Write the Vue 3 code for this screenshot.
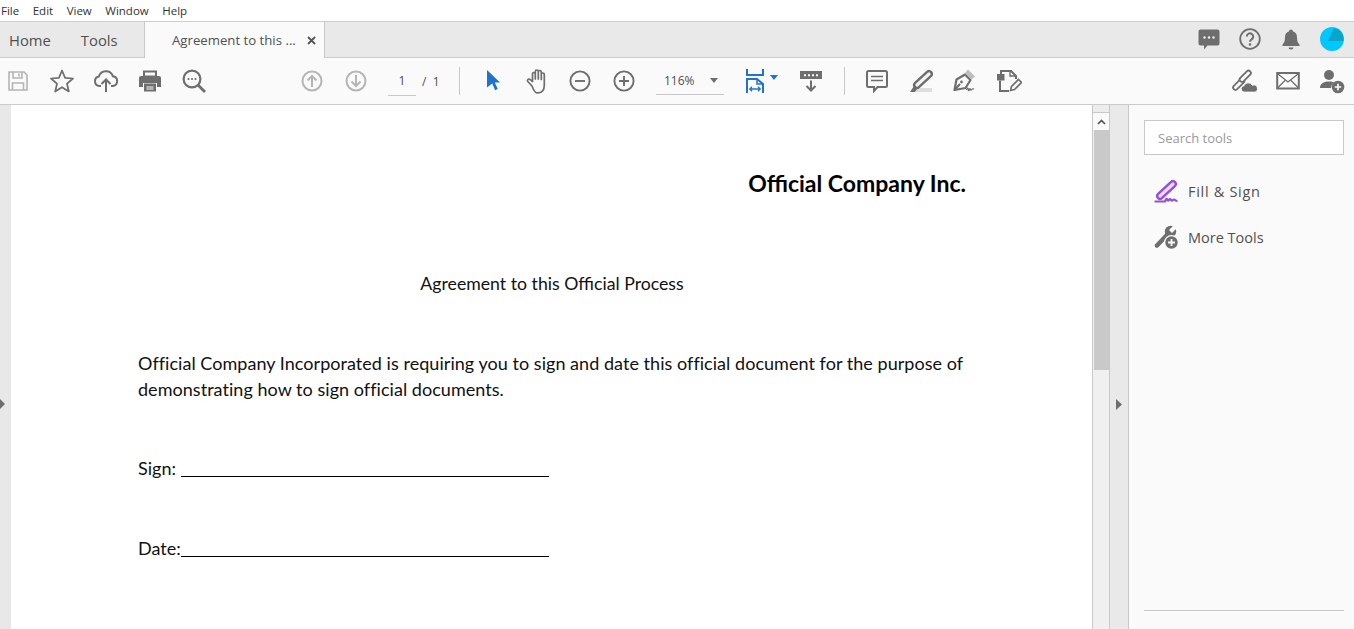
<script setup>
</script>

<template>
  <div class="app">
    <nav class="menubar">
      <span>File</span><span>Edit</span><span>View</span><span>Window</span><span>Help</span>
    </nav>

    <header class="tabbar">
      <div class="navtabs"><span class="home">Home</span><span class="tools">Tools</span></div>
      <div class="doctab">
        <span class="doctitle">Agreement to this ...</span>
        <svg class="close" width="9" height="9" viewBox="0 0 9 9"><path d="M1 1l7 7M8 1L1 8" stroke="#555" stroke-width="1.8"/></svg>
      </div>
      <div class="tabright">
        <svg width="24" height="24" viewBox="0 0 24 24"><path d="M3.500 2.500h17a2 2 0 0 1 2 2v12a2 2 0 0 1-2 2h-10l-3.500 4v-4h-3.500a2 2 0 0 1-2-2v-12a2 2 0 0 1 2-2z" fill="#6e6e6e"/><circle cx="7.500" cy="10.500" r="1.200" fill="#eee"/><circle cx="12" cy="10.500" r="1.200" fill="#eee"/><circle cx="16.500" cy="10.500" r="1.200" fill="#eee"/></svg>
        <svg width="24" height="24" viewBox="0 0 24 24"><circle cx="12" cy="12" r="9.800" fill="none" stroke="#6e6e6e" stroke-width="1.800"/><path d="M8.800 9.500a3.200 3.200 0 1 1 4.800 2.800c-1 .6-1.600 1.200-1.600 2.400" fill="none" stroke="#6e6e6e" stroke-width="2"/><circle cx="12" cy="17.500" r="1.300" fill="#6e6e6e"/></svg>
        <svg width="24" height="24" viewBox="0 0 24 24"><path d="M12 2.500c1.200 0 1.800.8 1.800 1.700 3 .8 4.200 3.200 4.200 6.300 0 4 1 5.500 2.500 7v1.500h-17V17.500c1.500-1.500 2.500-3 2.500-7 0-3.100 1.200-5.500 4.200-6.300 0-.9.600-1.700 1.800-1.700z" fill="#6e6e6e"/><path d="M9.500 20.500h5a2.500 2 0 0 1-5 0z" fill="#6e6e6e"/></svg>
        <svg width="24" height="24" viewBox="0 0 24 24"><circle cx="12" cy="12" r="12" fill="#00c8ff"/><path d="M14 1A11.500 11.500 0 0 1 23.500 12V14H8z" fill="#0aa5c9"/></svg>
      </div>
    </header>

    <section class="toolbar">
      <div class="group">
        <button class="btn"><svg width="22" height="22" viewBox="0 0 22 22" fill="none" stroke="#b5b5b5" stroke-width="1.600"><path d="M2 2h15l3 3v15H2z"/><path d="M6 2v6h9V2M12 3.500v3M5.500 20v-7h11v7"/></svg></button>
        <button class="btn"><svg width="26" height="26" viewBox="0 0 26 26"><path d="M13 2.500l3.100 7.300 7.900.7-6 5.200 1.800 7.800L13 19.300 6.200 23.500 8 15.700l-6-5.200 7.900-.7z" fill="none" stroke="#6e6e6e" stroke-width="1.700" stroke-linejoin="round"/></svg></button>
        <button class="btn"><svg width="26" height="26" viewBox="0 0 26 26" fill="none" stroke="#6e6e6e" stroke-width="2"><path d="M8 18H6.500a4.800 4.800 0 0 1-.6-9.500 7.300 7.300 0 0 1 14-.2 4.900 4.900 0 0 1 .1 9.700H18"/><path d="M13 24V12M8.500 16l4.500-4.500 4.500 4.500"/></svg></button>
        <button class="btn"><svg width="24" height="24" viewBox="0 0 24 24"><path d="M6 2.500h12v5H6z" fill="none" stroke="#6e6e6e" stroke-width="2"/><path d="M3 7h18a2 2 0 0 1 2 2v9h-4v-4H5v4H1V9a2 2 0 0 1 2-2z" fill="#6e6e6e"/><path d="M6 14.500h12v8H6z" fill="#6e6e6e"/><path d="M8.500 18h7M8.500 20h7" stroke="#fafafa" stroke-width="1.200"/></svg></button>
        <button class="btn"><svg width="26" height="26" viewBox="0 0 26 26"><circle cx="11" cy="11" r="8.400" fill="none" stroke="#6e6e6e" stroke-width="2.200"/><path d="M17 17l7 7" stroke="#6e6e6e" stroke-width="2.800"/><circle cx="7.500" cy="11" r="1.100" fill="#6e6e6e"/><circle cx="11" cy="11" r="1.100" fill="#6e6e6e"/><circle cx="14.500" cy="11" r="1.100" fill="#6e6e6e"/></svg></button>
      </div>

      <div class="group pager">
        <button class="btn"><svg width="22" height="22" viewBox="0 0 22 22" fill="none" stroke="#b5b5b5" stroke-width="2"><circle cx="11" cy="11" r="9.500"/><path d="M11 17V6M6.500 10.500L11 6l4.500 4.500"/></svg></button>
        <button class="btn"><svg width="22" height="22" viewBox="0 0 22 22" fill="none" stroke="#b5b5b5" stroke-width="2"><circle cx="11" cy="11" r="9.500"/><path d="M11 5v11M6.500 11.500L11 16l4.500-4.500"/></svg></button>
      </div>
      <div class="pageinput">1</div>
      <span class="pagetotal">/&nbsp;&nbsp;1</span>
      <i class="sep sep1"></i>

      <div class="group">
        <button class="btn"><svg width="16" height="22" viewBox="-1 1 16 22"><path d="M2 1l13 12.500H9.800l3 6.500-2.700 1.200-2.900-6.700L2 18.500z" fill="#1f73cc"/></svg></button>
        <button class="btn"><svg width="24" height="26" viewBox="-2 0 24 26" fill="none" stroke="#6e6e6e" stroke-width="1.700" stroke-linecap="round" stroke-linejoin="round"><path d="M6 18L1.800 13.500c-1.200-1.600 1-3.300 2.500-1.900L6.500 13.500V6c0-2 2.800-2 2.800 0v5V3.500c0-2 3-2 3 0V11V4c0-2 3-2 3 0v7.500V6.500c0-2 3-2 3 0V17c0 5-2.500 7.800-6 7.800H11c-2.500 0-3.500-3-5-6.800z"/></svg></button>
        <button class="btn"><svg width="22" height="22" viewBox="0 0 22 22" fill="none" stroke="#6e6e6e" stroke-width="1.900"><circle cx="11" cy="11" r="9.600"/><path d="M6 11h10"/></svg></button>
        <button class="btn"><svg width="22" height="22" viewBox="0 0 22 22" fill="none" stroke="#6e6e6e" stroke-width="1.900"><circle cx="11" cy="11" r="9.600"/><path d="M6 11h10M11 6v10"/></svg></button>
      </div>

      <div class="zoombox"><span>116%</span><svg width="8" height="5" viewBox="0 0 8 5"><path d="M0 0h8L4 5z" fill="#6e6e6e"/></svg></div>

      <div class="fit">
        <svg width="18" height="24" viewBox="0 0 18 24" fill="none" stroke="#1f73cc" stroke-width="2"><path d="M1 0v6h16V0"/><path d="M1 24V10h10l6 5v9"/><path d="M11 10v5h6" stroke-width="1.500"/><path d="M4 20h10M6 17.800L3.800 20 6 22.200M12 17.800l2.200 2.200-2.200 2.200" stroke-width="1.300"/></svg>
        <svg width="8" height="5" viewBox="0 0 8 5"><path d="M0 0h8L4 5z" fill="#1f73cc"/></svg>
      </div>

      <button class="btn readbtn"><svg width="22" height="22" viewBox="0 0 22 22"><path d="M0 1h22v8H0z" fill="#6e6e6e"/><path d="M4 4.200h2v2H4zM8 4.200h2v2H8zM12 4.200h2v2h-2zM16 4.200h2v2h-2z" fill="#fafafa"/><path d="M11 10.500v10M6.500 16l4.500 4.500 4.500-4.500" fill="none" stroke="#6e6e6e" stroke-width="2"/></svg></button>
      <i class="sep sep2"></i>

      <div class="group">
        <button class="btn"><svg width="22" height="24" viewBox="0 0 22 24"><path d="M2.500 2h17a1.500 1.500 0 0 1 1.500 1.500v13a1.500 1.500 0 0 1-1.500 1.500h-8l-3.500 4v-4h-5.500A1.500 1.500 0 0 1 1 16.500v-13A1.500 1.500 0 0 1 2.500 2z" fill="none" stroke="#6e6e6e" stroke-width="2"/><path d="M5 7.500h12M5 11.500h12" stroke="#6e6e6e" stroke-width="1.500"/></svg></button>
        <button class="btn"><svg width="24" height="24" viewBox="0 0 24 24"><path d="M7 19h16v4H7z" fill="#dedede"/><path d="M1 23h5l2-3-3-3z" fill="#6e6e6e"/><path d="M20 5L8 16" stroke="#6e6e6e" stroke-width="8" stroke-linecap="round"/><path d="M20 5L8 16" stroke="#f2f2f2" stroke-width="3.200" stroke-linecap="round"/></svg></button>
        <button class="btn"><svg width="24" height="24" viewBox="0 0 24 24" fill="none" stroke="#6e6e6e" stroke-width="2.200" stroke-linejoin="round"><path d="M1.500 21L3.500 10.500 12 5.500 17.500 11 12.500 19z"/><path d="M1.500 21L7 15"/><circle cx="8.500" cy="13" r="1.400" fill="#6e6e6e" stroke="none"/><path d="M12 4l3-3.500 7 7-3.500 3z" fill="#bdbdbd" stroke="none"/><path d="M13.500 21c1-2.500 1.500-2.500 2 0s1-2.500 1.700-1 .8 1.500 1.500.5 1-1 2.500-.5" stroke-width="1.300"/></svg></button>
        <button class="btn"><svg width="26" height="24" viewBox="0 0 26 24" fill="none" stroke="#6e6e6e" stroke-width="2"><path d="M5 5V2h10l5 5v3"/><path d="M14 2v5h6" stroke-width="1.400"/><path d="M1 5h7.500v6.500H1z" fill="#6e6e6e" stroke="none"/><path d="M4 11.500V22h9"/><path d="M14.500 21.500l1-4 7-7 3 3-7 7z" stroke-width="1.600"/></svg></button>
      </div>

      <div class="group shareicons">
        <button class="btn"><svg width="26" height="24" viewBox="0 0 26 24" fill="none" stroke-linecap="round"><path d="M4.500 18.500L11 12" stroke="#6e6e6e" stroke-width="6.500"/><path d="M4.500 18.500L11 12" stroke="#fafafa" stroke-width="3"/><path d="M11 10.500L17.500 4" stroke="#6e6e6e" stroke-width="6.500"/><path d="M11 10.500L17.500 4" stroke="#fafafa" stroke-width="3"/><path d="M12.500 23a3.200 3.200 0 0 1 .5-6.300 4.500 4.500 0 0 1 8.200-.5 3.500 3.500 0 0 1 3.300 6.800z" fill="#6e6e6e" stroke="#fafafa" stroke-width="1"/></svg></button>
        <button class="btn"><svg width="24" height="20" viewBox="0 0 24 20" fill="none" stroke="#6e6e6e"><rect x="1.200" y="2" width="21.600" height="15.500" stroke-width="2"/><path d="M2 3l10 8 10-8M2 16.500l7.500-7.500M22 16.500L14.500 9" stroke-width="1.300"/></svg></button>
        <button class="btn"><svg width="26" height="26" viewBox="0 0 26 26"><circle cx="10" cy="7" r="5" fill="#6e6e6e"/><path d="M1 20c0-4 3-6.500 9-6.500 2.500 0 4 .5 5 1.200-2 1.200-3 3-3 5.300z" fill="#6e6e6e"/><circle cx="19" cy="19" r="6.300" fill="#6e6e6e"/><path d="M15.800 19h6.400M19 15.800v6.400" stroke="#fafafa" stroke-width="1.700"/></svg></button>
      </div>
    </section>

    <main class="workspace">
      <aside class="gutter"><svg width="6" height="12" viewBox="0 0 6 12"><path d="M0 0l6 6-6 6z" fill="#6e6e6e"/></svg></aside>

      <article class="page">
        <h1>Official Company Inc.</h1>
        <h2>Agreement to this Official Process</h2>
        <p class="body">Official Company Incorporated is requiring you to sign and date this official document for the purpose of demonstrating how to sign official documents.</p>
        <p class="sign"><span class="lab">Sign:</span><u class="blank"></u></p>
        <p class="date"><span class="lab">Date:</span><u class="blank"></u></p>
      </article>

      <div class="scrollbar">
        <div class="sb-cap"></div>
        <div class="sb-up"><svg width="9" height="6" viewBox="0 0 9 6"><path d="M1 5l3.500-3.500L8 5" fill="none" stroke="#555" stroke-width="1.700"/></svg></div>
        <div class="sb-thumb"></div>
      </div>

      <div class="strip"><svg width="6" height="11" viewBox="0 0 6 11"><path d="M0 0l6 5.500L0 11z" fill="#6e6e6e"/></svg></div>

      <aside class="tools-panel">
        <div class="search">Search tools</div>
        <div class="tool first">
          <svg width="24" height="24" viewBox="0 0 24 24" fill="none"><path d="M19 5L6 17" stroke="#9450d8" stroke-width="8" stroke-linecap="round"/><path d="M19 5L6 17" stroke="#ead9f9" stroke-width="3.200" stroke-linecap="round"/><path d="M0.500 22.500h10.500c1-3 2-3.500 2.500-1.500s1.500-1 2.500-1 1 2 2 1.500 2-1.500 3-.5 1.500 1 2.500 1" stroke="#9450d8" stroke-width="2.200"/></svg>
          <span class="fill-label">Fill &amp; Sign</span>
        </div>
        <div class="tool second">
          <svg width="24" height="24" viewBox="0 0 24 24" fill="none"><path d="M3 20.500L13 10" stroke="#6e6e6e" stroke-width="4.500" stroke-linecap="round"/><circle cx="16.500" cy="6.500" r="5.700" fill="#6e6e6e"/><path d="M16.500 6.500L22 1" stroke="#fafafa" stroke-width="4.200"/><circle cx="17.500" cy="17.500" r="7.500" fill="#fafafa"/><circle cx="17.500" cy="17.500" r="6.200" fill="#6e6e6e"/><path d="M14 17.500h7M17.500 14v7" stroke="#fafafa" stroke-width="1.800"/></svg>
          <span>More Tools</span>
        </div>
        <div class="panel-foot"></div>
      </aside>
    </main>
  </div>
</template>

<style scoped>
.app {
  width: 1354px;
  height: 629px;
  overflow: hidden;
  display: flex;
  flex-direction: column;
  background: #fff;
  font-family: "Open Sans", "Noto Sans", sans-serif;
  color: #4b4b4b;
}
button { all: unset; }

.menubar {
  height: 21px;
  flex: none;
  display: flex;
  align-items: center;
  gap: 13.500px;
  padding-left: 1px;
  font-size: 11.500px;
  color: #333;
  background: #fff;
  border-bottom: 1px solid #cfcfcf;
  box-sizing: content-box;
}

.tabbar {
  height: 36px;
  flex: none;
  display: flex;
  background: #e9e9e9;
}
.navtabs {
  width: 144px;
  display: flex;
  align-items: center;
  font-size: 14.800px;
  color: #505050;
  border-bottom: 1px solid #cdcdcd;
  box-sizing: border-box;
}
.home { margin-left: 9px; }
.tools { margin-left: 30px; }
.doctab {
  width: 181px;
  box-sizing: border-box;
  height: 36px;
  background: #fafafa;
  border-left: 1px solid #c9c9c9;
  border-right: 1px solid #c9c9c9;
  display: flex;
  align-items: center;
  padding-left: 27px;
  font-size: 13.200px;
  color: #505050;
}
.doctitle { width: 135px; white-space: nowrap; }
.close { flex: none; }
.tabright {
  flex: 1;
  display: flex;
  justify-content: flex-end;
  align-items: center;
  gap: 17px;
  padding: 0 10px 2px 0;
  border-bottom: 1px solid #cdcdcd;
}

.toolbar {
  height: 47px;
  flex: none;
  box-sizing: border-box;
  display: flex;
  align-items: center;
  background: #fafafa;
  border-bottom: 1px solid #cbcbcb;
}
.group { display: flex; gap: 8px; align-items: center; }
.btn {
  width: 36px;
  height: 36px;
  display: flex;
  align-items: center;
  justify-content: center;
  flex: none;
}
.pager { margin-left: 82px; }
.pageinput {
  width: 28px;
  margin-left: 14px;
  height: 28px;
  line-height: 28px;
  text-align: center;
  font-size: 12px;
  color: #505050;
  border-bottom: 1px solid #c8c8c8;
}
.pagetotal { margin-left: 6px; font-size: 12px; color: #505050; width: 17px; white-space: nowrap; }
.sep { display: block; width: 1px; height: 28px; background: #c8c8c8; flex: none; }
.sep1 { margin-left: 20px; }
.sep1 + .group { margin-left: 14px; }
.zoombox {
  width: 68px;
  height: 28px;
  box-sizing: border-box;
  margin-left: 14px;
  border-bottom: 1px solid #c8c8c8;
  display: flex;
  align-items: center;
  padding-left: 8px;
  font-size: 12px;
  color: #505050;
  gap: 15px;
}
.fit { margin-left: 22px; display: flex; gap: 6px; align-items: center; width: 32px; }
.fit svg:last-child { margin-top: -8px; }
.readbtn { margin-left: 15px; }
.sep2 { margin-left: 15px; }
.sep2 + .group { margin-left: 14px; }
.shareicons { margin-left: auto; margin-right: 4px; }

.workspace { flex: 1; display: flex; min-height: 0; }
.gutter {
  width: 11px;
  flex: none;
  background: #e8e8e8;
  padding-top: 293px;
  box-sizing: border-box;
}
.gutter svg { display: block; margin-left: -1px; }

.page {
  width: 1081px;
  flex: none;
  box-sizing: border-box;
  padding: 65px 126px 0 127px;
  background: #fff;
  color: #111;
  font-family: "Lato", "Carlito", sans-serif;
  font-size: 18px;
  letter-spacing: 0.04px;
  line-height: 26px;
}
h1 {
  margin: 0;
  text-align: right;
  font-size: 23px;
  font-weight: 700;
  line-height: 26px;
  color: #000;
  letter-spacing: 0;
}
h2 {
  margin: 75px 0 0;
  text-align: center;
  font-size: 17.700px;
  font-weight: 400;
  line-height: 26px;
  letter-spacing: 0;
}
.body { margin: 53px 0 0; }
.sign { margin: 53px 0 0; }
.date { margin: 54px 0 0; }
.sign, .date { display: flex; align-items: flex-end; width: 411px; white-space: nowrap; }
.lab { width: 43px; flex: none; }
.blank {
  flex: 1;
  height: 1px;
  background: #000;
  margin-bottom: 4px;
  text-decoration: none;
}

.scrollbar {
  width: 18px;
  flex: none;
  box-sizing: border-box;
  background: #f0f0f0;
  border-left: 1px solid #c8c8c8;
  border-right: 1px solid #c8c8c8;
}
.sb-cap { height: 7px; background: #ececec; border-bottom: 1px solid #c8c8c8; }
.sb-up { height: 17px; display: flex; align-items: center; justify-content: center; background: #fafafa; }
.sb-thumb { height: 240px; margin-left: 1px; width: 15px; background: #c9c9c9; }

.strip {
  width: 18px;
  flex: none;
  box-sizing: border-box;
  background: #e9e9e9;
  padding: 294px 0 0 6px;
}
.strip svg { display: block; }

.tools-panel {
  flex: 1;
  box-sizing: border-box;
  background: #fafafa;
  border-left: 1px solid #c8c8c8;
  padding: 15px 10px 0 15px;
  display: flex;
  flex-direction: column;
}
.search {
  height: 35px;
  box-sizing: border-box;
  border: 1px solid #c8c8c8;
  background: #fff;
  padding-left: 13px;
  line-height: 35px;
  font-size: 13px;
  color: #9a9a9a;
}
.tool {
  display: flex;
  align-items: center;
  height: 24px;
  padding-left: 10px;
  gap: 10px;
  font-size: 14.500px;
  color: #505050;
}
.tool svg { flex: none; }
.fill-label { letter-spacing: 0.7px; }
.first { margin-top: 24px; }
.second { margin-top: 22px; }
.panel-foot { margin-top: auto; margin-bottom: 18px; height: 1px; background: #c8c8c8; }
</style>
